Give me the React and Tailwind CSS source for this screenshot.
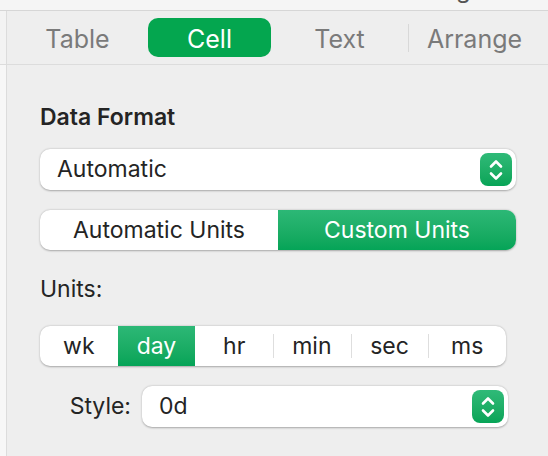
import React from 'react';

const Stepper = () => (
  <div className="w-[32px] h-[33px] rounded-[8px] bg-gradient-to-b from-[#2fba78] to-[#06a457] flex items-center justify-center">
    <svg width="16" height="24" viewBox="0 0 16 24" fill="none" stroke="white" strokeWidth="2.6" strokeLinecap="round" strokeLinejoin="round">
      <path d="M3 8.5 L8 3.5 L13 8.5" />
      <path d="M3 15.5 L8 20.5 L13 15.5" />
    </svg>
  </div>
);

const Select = ({ value, className = '' }) => (
  <div className={`h-[41px] bg-white rounded-[10px] shadow-[0_0.5px_2px_rgba(0,0,0,0.3)] flex items-center justify-between pl-[17px] pr-[4px] ${className}`}>
    <span className="text-[23px] text-[#242424]">{value}</span>
    <Stepper />
  </div>
);

const units = ['wk', 'day', 'hr', 'min', 'sec', 'ms'];

export default function App() {
  return (
    <div className="w-[548px] h-[456px] bg-[#eeeeee] overflow-hidden flex flex-col font-['Inter','Liberation_Sans',sans-serif]">
      {/* toolbar remnant */}
      <div className="h-[11px] bg-[#f5f5f5] border-b border-[#d6d6d6] relative overflow-hidden">
        <span className="absolute left-[456px] top-[-24px] text-[24px] leading-[28px] text-[#555]">g</span>
      </div>

      {/* tab bar */}
      <div className="h-[54px] flex border-b border-[#dcdcdc]">
        <div className="w-[6px] bg-[#f3f3f3] border-r border-[#dcdcdc] box-content"></div>
        <div className="flex-1 flex items-center text-[25px] leading-[30px] text-[#7a7a7a]">
          <div className="w-[141px] text-center pt-[3px]">Table</div>
          <div className="w-[123px] h-[39px] mt-[-1px] rounded-[10px] bg-[#04a64f] text-white flex items-center justify-center pt-[3px]">Cell</div>
          <div className="w-[137px] text-center pt-[3px]">Text</div>
          <div className="w-px h-[28px] bg-[#d8d8d8]"></div>
          <div className="flex-1 text-center pr-[8px] pt-[3px]">Arrange</div>
        </div>
      </div>

      {/* inspector body */}
      <div className="flex-1 flex">
        <div className="w-[6px] bg-[#f7f7f7] border-r border-[#dcdcdc] box-content"></div>
        <div className="flex-1 pl-[33px] pr-[33px] flex flex-col">
          <div className="mt-[38px] text-[23px] leading-[28px] font-semibold text-[#242424]">Data Format</div>

          <Select value="Automatic" className="mt-[18px] mr-[-1px]" />

          <div className="mt-[20px] h-[40px] mr-[-1px] rounded-[10px] bg-white shadow-[0_0.5px_2px_rgba(0,0,0,0.3)] flex overflow-hidden text-[23px]">
            <div className="w-[238px] flex items-center justify-center text-[#242424]">Automatic Units</div>
            <div className="flex-1 flex items-center justify-center text-white bg-gradient-to-b from-[#2cb876] to-[#04a457]">Custom Units</div>
          </div>

          <div className="mt-[25px] text-[23px] leading-[28px] text-[#242424]">Units:</div>

          <div className="mt-[23px] h-[40px] w-[466px] rounded-[10px] bg-white shadow-[0_0.5px_2px_rgba(0,0,0,0.3)] flex items-center overflow-hidden text-[23px]">
            {units.map((u, i) => {
              const active = u === 'day';
              const sep = i >= 3;
              return (
                <div key={u} className="flex-1 h-full flex items-center relative">
                  {sep && <div className="absolute left-0 top-[8px] w-px h-[24px] bg-[#dedede]"></div>}
                  <div
                    className={`w-full h-full flex items-center justify-center ${
                      active ? 'bg-gradient-to-b from-[#2cb876] to-[#04a457] text-white' : 'text-[#242424]'
                    }`}
                  >
                    {u}
                  </div>
                </div>
              );
            })}
          </div>

          <div className="mt-[20px] flex items-center">
            <div className="w-[91px] text-right text-[23px] text-[#242424]">Style:</div>
            <Select value="0d" className="ml-[11px] w-[366px]" />
          </div>
        </div>
      </div>
    </div>
  );
}
